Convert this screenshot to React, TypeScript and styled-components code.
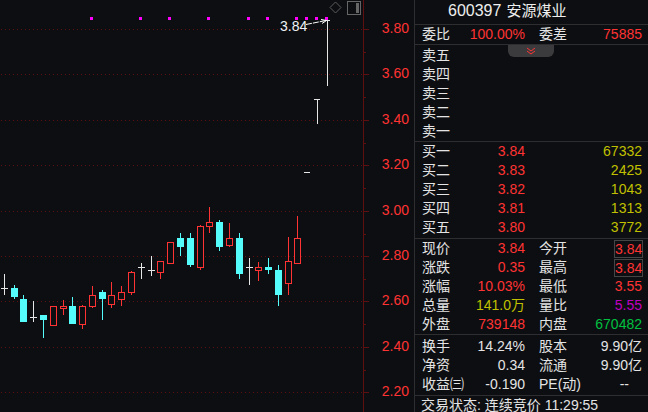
import React from 'react';
import styled, { createGlobalStyle } from 'styled-components';

const RED = '#ff3333';
const CYAN = '#54fcfc';
const WHITE = '#e6e6e6';
const GRID = '#5e0f0f';

const tones: Record<string, string> = {
  red: RED,
  white: '#e4e4e4',
  olive: '#c0c000',
  purple: '#c000c0',
  green: '#00c040',
};

const GlobalStyle = createGlobalStyle`
  html, body {
    margin: 0;
    padding: 0;
    background: #0d0e11;
  }
  * {
    box-sizing: border-box;
  }
`;

const Page = styled.div`
  display: flex;
  width: 648px;
  height: 412px;
  overflow: hidden;
  background: #0d0e11;
  color: #e4e4e4;
  font-family: 'Liberation Sans', 'Noto Sans CJK SC', sans-serif;
  font-size: 14px;
  line-height: 19px;
`;

const ChartArea = styled.div`
  width: 414px;
  height: 412px;
  flex: none;
`;

const ChartSvg = styled.svg`
  display: block;
`;

const AxisText = styled.text`
  fill: ${RED};
  font-family: 'Liberation Sans', sans-serif;
  font-size: 14px;
`;

const LastPrice = styled.text`
  fill: #eef2f6;
  font-family: 'Liberation Sans', sans-serif;
  font-size: 14px;
`;

const Panel = styled.div`
  position: relative;
  display: flex;
  flex-direction: column;
  width: 234px;
  height: 412px;
  flex: none;
  border-left: 1px solid #2e2e30;
`;

const Title = styled.div`
  display: flex;
  align-items: center;
  height: 25px;
  padding: 0 0 3px 33px;
  border-bottom: 1px solid #2e2e30;
  font-size: 16px;
  color: #eeeeee;
`;

const StockName = styled.span`
  margin-left: 5px;
  font-size: 15px;
`;

const Section = styled.div<{ $h: number; $pt?: number }>`
  height: ${(p) => p.$h}px;
  padding-top: ${(p) => p.$pt ?? 0}px;
  border-bottom: 1px solid #2e2e30;
`;

const Row = styled.div`
  display: grid;
  grid-template-columns: 103px 103px;
  column-gap: 14px;
  height: 19px;
  padding-left: 7px;
  align-items: center;
`;

const Cell = styled.div`
  display: flex;
  justify-content: space-between;
  align-items: center;
  min-width: 0;
  white-space: nowrap;
`;

const Label = styled.span`
  color: #e4e4e4;
`;

const Value = styled.span<{ $tone?: string; $boxed?: boolean; $inset?: number }>`
  margin-left: auto;
  margin-right: ${(p) => p.$inset ?? 0}px;
  color: ${(p) => tones[p.$tone ?? 'red']};
  ${(p) =>
    p.$boxed &&
    `
    width: 29px;
    height: 18px;
    margin-right: -1px;
    border: 1px solid #454545;
    line-height: 16px;
    text-align: right;
  `}
`;

const Status = styled.div`
  height: 16px;
  padding: 3px 0 0 6px;
  line-height: 13px;
  white-space: nowrap;
  overflow: visible;
  color: #e4e4e4;
`;

const CollapseTab = styled.div`
  position: absolute;
  top: 45px;
  left: 93px;
  display: flex;
  justify-content: center;
  align-items: center;
  width: 46px;
  height: 12px;
  background: #3b3b3e;
  border-radius: 0 0 6px 6px;
`;

type Kind = 'up' | 'down' | 'flat';
// x, wick top, wick bottom, body top, body bottom, kind
type Candle = [number, number, number, number, number, Kind];

const candles: Candle[] = [
  [4, 274, 295, 288, 288, 'flat'],
  [14, 285, 299, 288, 297, 'down'],
  [23, 295, 322, 299, 322, 'down'],
  [33, 301, 322, 317, 317, 'flat'],
  [43, 315, 338, 315, 320, 'down'],
  [53, 306, 326, 306, 325, 'up'],
  [63, 300, 315, 306, 308, 'up'],
  [72, 297, 324, 306, 324, 'down'],
  [82, 305, 329, 306, 324, 'up'],
  [92, 286, 308, 295, 306, 'up'],
  [102, 290, 320, 292, 299, 'down'],
  [111, 282, 308, 295, 304, 'up'],
  [121, 286, 306, 292, 299, 'up'],
  [131, 271, 295, 272, 292, 'up'],
  [141, 263, 279, 267, 267, 'flat'],
  [151, 256, 276, 270, 270, 'flat'],
  [160, 261, 279, 261, 272, 'up'],
  [170, 242, 263, 242, 263, 'up'],
  [180, 233, 256, 238, 247, 'down'],
  [190, 233, 267, 238, 265, 'down'],
  [200, 225, 270, 226, 267, 'up'],
  [209, 207, 233, 222, 226, 'up'],
  [219, 220, 251, 222, 247, 'down'],
  [229, 223, 247, 238, 245, 'up'],
  [239, 233, 279, 238, 274, 'down'],
  [249, 258, 285, 267, 267, 'flat'],
  [258, 262, 281, 267, 270, 'up'],
  [268, 258, 274, 267, 270, 'down'],
  [278, 265, 306, 270, 295, 'down'],
  [288, 237, 295, 261, 283, 'up'],
  [297, 216, 263, 238, 263, 'up'],
];

const gridLines = [
  { y: 29, text: '3.80' },
  { y: 74, text: '3.60' },
  { y: 120, text: '3.40' },
  { y: 165, text: '3.20' },
  { y: 211, text: '3.00' },
  { y: 256, text: '2.80' },
  { y: 301, text: '2.60' },
  { y: 347, text: '2.40' },
  { y: 392, text: '2.20' },
];

const minorTicks = [52, 97, 143, 188, 234, 279, 324, 370];
const markers = [90, 139, 168, 207, 247, 266, 295, 305, 315, 325];

const CandleMark = ({ c }: { c: Candle }) => {
  const [x, wt, wb, bt, bb, kind] = c;
  const cx = x + 0.5;
  if (kind === 'flat') {
    return (
      <g stroke={WHITE}>
        <line x1={cx} x2={cx} y1={wt} y2={wb} />
        <line x1={x - 3} x2={x + 4} y1={bt + 0.5} y2={bt + 0.5} />
      </g>
    );
  }
  if (kind === 'down') {
    return (
      <g>
        <line x1={cx} x2={cx} y1={wt} y2={wb} stroke={CYAN} />
        <rect x={x - 3} y={bt} width={7} height={bb - bt} fill={CYAN} />
      </g>
    );
  }
  return (
    <g stroke={RED}>
      <line x1={cx} x2={cx} y1={wt} y2={bt} />
      <line x1={cx} x2={cx} y1={bb} y2={wb} />
      <rect x={x - 2.5} y={bt + 0.5} width={6} height={bb - bt} fill="#0d0e11" />
    </g>
  );
};

const Chart = () => (
  <ChartSvg width={414} height={412} viewBox="0 0 414 412">
    {gridLines.map((g) => (
      <g key={g.text}>
        <line x1={1} x2={363} y1={g.y + 0.5} y2={g.y + 0.5} stroke={GRID} strokeDasharray="1 3" />
        <line x1={363} x2={369} y1={g.y + 0.5} y2={g.y + 0.5} stroke={GRID} />
        <AxisText x={409} y={g.y + 4} textAnchor="end">
          {g.text}
        </AxisText>
      </g>
    ))}
    <line x1={363.5} x2={363.5} y1={0} y2={412} stroke={GRID} />
    {minorTicks.map((y) => (
      <line key={y} x1={363} x2={366} y1={y + 0.5} y2={y + 0.5} stroke={GRID} />
    ))}

    {candles.map((c) => (
      <CandleMark key={c[0]} c={c} />
    ))}

    {/* last three sessions, limit-up bars */}
    <g stroke={WHITE}>
      <line x1={304} x2={310} y1={172.5} y2={172.5} />
      <line x1={314} x2={320} y1={99.5} y2={99.5} />
      <line x1={317.5} x2={317.5} y1={99} y2={124} />
      <line x1={325} x2={330} y1={20.5} y2={20.5} />
      <line x1={327.5} x2={327.5} y1={20} y2={86} />
    </g>

    {markers.map((x) => (
      <rect key={x} x={x} y={17} width={3} height={3} fill="#ff00ff" />
    ))}

    <LastPrice x={280} y={31}>3.84</LastPrice>
    <g stroke="#ffffff" fill="none">
      <path d="M306 24.5 L326 20.5" strokeDasharray="6 1" />
      <path d="M321 19.5 L326.5 20.5 L322 23.5" />
    </g>

    <path d="M335.5 2 L341 7.5 L335.5 13 L330 7.5 Z" fill="none" stroke="#5c5c5c" />
    <rect x={347.5} y={1.5} width={13} height={13} fill="none" stroke="#666666" />
    <rect x={356} y={3} width={3} height={10} fill="#666666" />
  </ChartSvg>
);

const sellLevels = ['卖五', '卖四', '卖三', '卖二', '卖一'];
const buyLevels = [
  ['买一', '3.84', '67332'],
  ['买二', '3.83', '2425'],
  ['买三', '3.82', '1043'],
  ['买四', '3.81', '1313'],
  ['买五', '3.80', '3772'],
];

type Item = { label: string; value: string; tone?: string; boxed?: boolean; inset?: number };

const quoteRows: [Item, Item][] = [
  [{ label: '现价', value: '3.84' }, { label: '今开', value: '3.84', boxed: true }],
  [{ label: '涨跌', value: '0.35' }, { label: '最高', value: '3.84', boxed: true }],
  [{ label: '涨幅', value: '10.03%' }, { label: '最低', value: '3.55' }],
  [{ label: '总量', value: '141.0万', tone: 'olive' }, { label: '量比', value: '5.55', tone: 'purple' }],
  [{ label: '外盘', value: '739148' }, { label: '内盘', value: '670482', tone: 'green' }],
];

const statRows: [Item, Item][] = [
  [{ label: '换手', value: '14.24%', tone: 'white' }, { label: '股本', value: '9.90亿', tone: 'white' }],
  [{ label: '净资', value: '0.34', tone: 'white' }, { label: '流通', value: '9.90亿', tone: 'white' }],
  [
    { label: '收益㈢', value: '-0.190', tone: 'white' },
    { label: 'PE(动)', value: '--', tone: 'white', inset: 13 },
  ],
];

const PairRow = ({ items }: { items: [Item, Item] }) => (
  <Row>
    {items.map((item) => (
      <Cell key={item.label}>
        <Label>{item.label}</Label>
        <Value $tone={item.tone} $boxed={item.boxed} $inset={item.inset}>
          {item.value}
        </Value>
      </Cell>
    ))}
  </Row>
);

const App = () => (
  <Page>
    <GlobalStyle />
    <ChartArea>
      <Chart />
    </ChartArea>
    <Panel>
      <Title>
        600397<StockName>安源煤业</StockName>
      </Title>
      <Section $h={20}>
        <PairRow
          items={[
            { label: '委比', value: '100.00%' },
            { label: '委差', value: '75885' },
          ]}
        />
      </Section>
      <Section $h={97} $pt={1}>
        {sellLevels.map((name) => (
          <Row key={name}>
            <Label>{name}</Label>
          </Row>
        ))}
      </Section>
      <Section $h={97}>
        {buyLevels.map(([name, price, volume]) => (
          <Row key={name}>
            <Cell>
              <Label>{name}</Label>
              <Value>{price}</Value>
            </Cell>
            <Cell>
              <Value $tone="olive">{volume}</Value>
            </Cell>
          </Row>
        ))}
      </Section>
      <Section $h={96}>
        {quoteRows.map((items) => (
          <PairRow key={items[0].label} items={items} />
        ))}
      </Section>
      <Section $h={61} $pt={2}>
        {statRows.map((items) => (
          <PairRow key={items[0].label} items={items} />
        ))}
      </Section>
      <Status>交易状态: 连续竞价 11:29:55</Status>
      <CollapseTab>
        <svg width="10" height="8" viewBox="0 0 10 8" fill="none" stroke={RED}>
          <path d="M1 1 L5 4 L9 1" />
          <path d="M1 4 L5 7 L9 4" />
        </svg>
      </CollapseTab>
    </Panel>
  </Page>
);

export default App;
